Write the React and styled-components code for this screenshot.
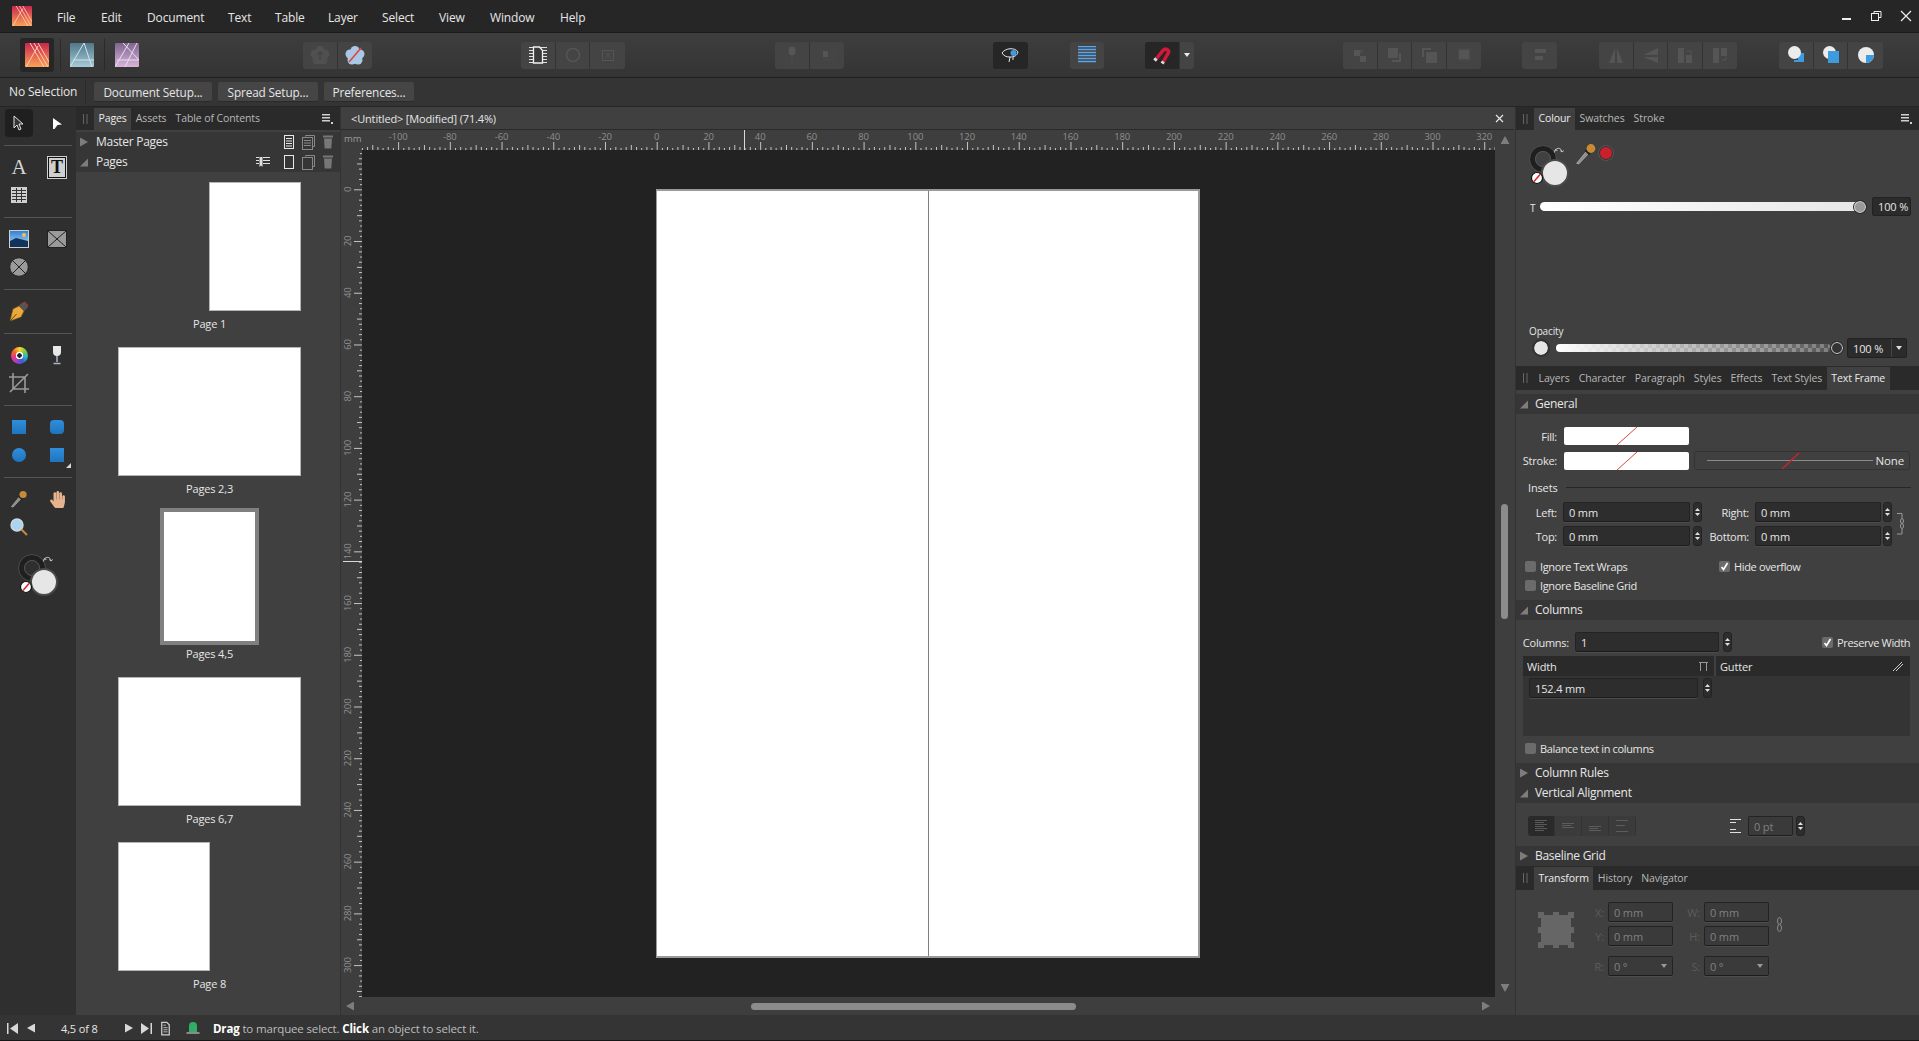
import React from "react";
import styled, { createGlobalStyle } from "styled-components";
import { FaHandPaper } from "react-icons/fa";

const GlobalStyle = createGlobalStyle`
  html, body { margin: 0; padding: 0; background: #262626; overflow: hidden; }
  body { font-family: "Open Sans", "Liberation Sans", sans-serif; font-size: 11.5px; color: #e6e6e6; letter-spacing: -0.15px; }
  * { box-sizing: border-box; }
  svg { display: block; flex: none; }
`;

const Page = styled.div`
  width: 1919px;
  height: 1041px;
  display: flex;
  flex-direction: column;
  overflow: hidden;
`;

/* top bars */
const MenuBar = styled.div`
  height: 33px;
  flex: none;
  display: flex;
  align-items: center;
  background: #262626;
  border-bottom: 1px solid #1b1b1b;
  padding-left: 12px;
`;
const MenuItem = styled.span`
  position: absolute;
  left: ${(p) => p.$x}px;
  top: 10px;
  font-size: 12px;
  line-height: 16px;
`;
const MenuItems = styled.div`
  flex: 1;
  position: relative;
  height: 32px;
  margin-left: -32px;
`;
const WinControls = styled.div`
  display: flex;
  align-items: center;
  gap: 18px;
  padding-right: 7px;
`;
const ToolBar = styled.div`
  height: 45px;
  flex: none;
  display: flex;
  align-items: center;
  padding-left: 20px;
  background: linear-gradient(#3e3e3e, #343434);
  border-bottom: 1px solid #1f1f1f;
`;
const Persona = styled.div`
  width: ${(p) => p.$w}px;
  height: 34px;
  margin-left: ${(p) => p.$ml || 0}px;
  display: flex;
  align-items: center;
  justify-content: center;
  border-radius: 3px;
  background: ${(p) => (p.$on ? "#262626" : "transparent")};
`;
const VSep = styled.div`
  width: 1px;
  height: ${(p) => p.$h || 32}px;
  margin-left: ${(p) => p.$ml}px;
  background: #2a2a2a;
`;
const BtnGroup = styled.div`
  display: flex;
  height: 27px;
  margin-left: ${(p) => p.$ml}px;
  border-radius: 3px;
  overflow: hidden;
`;
const ToolBtn = styled.div`
  width: ${(p) => p.$w || 34.6}px;
  height: 27px;
  display: flex;
  align-items: center;
  justify-content: center;
  background: ${(p) => (p.$dark ? "#262626" : "#444444")};
  border-right: 1px solid #333333;
  &:last-child { border-right: 0; }
`;
const ContextBar = styled.div`
  height: 29px;
  flex: none;
  display: flex;
  align-items: center;
  padding-left: 9px;
  background: #343434;
  border-bottom: 1px solid #252525;
`;
const NoSel = styled.span`
  width: 77px;
  font-size: 12px;
  border-right: 1px solid #2a2a2a;
  line-height: 24px;
`;
const CtxBtn = styled.div`
  width: ${(p) => p.$w}px;
  height: 20px;
  margin-left: ${(p) => p.$ml}px;
  display: flex;
  align-items: center;
  justify-content: center;
  font-size: 11.8px;
  background: #454545;
  border-radius: 2px;
  border-bottom: 1px solid #2a2a2a;
`;

/* main area */
const Main = styled.div`
  height: 908px;
  flex: none;
  display: flex;
`;
const ToolCol = styled.div`
  width: 76px;
  flex: none;
  padding-top: 2px;
  background: #2f2f2f;
`;
const ToolGrid = styled.div`
  display: grid;
  grid-template-columns: 38px 38px;
  grid-auto-rows: 28px;
  justify-items: center;
  align-items: center;
`;
const ToolSep = styled.div`
  height: 1px;
  margin: 7.5px 4px;
  background: #555555;
`;
const ToolCell = styled.div`
  width: 28px;
  height: 28px;
  display: flex;
  align-items: center;
  justify-content: center;
  border-radius: 4px;
  background: ${(p) => (p.$on ? "#1f1f1f" : "transparent")};
  position: relative;
`;
const ArtA = styled.span`
  font-family: "Liberation Serif", serif;
  font-size: 21px;
  color: #d5d5d5;
`;
const ArtT = styled.span`
  width: 18px;
  height: 21px;
  display: flex;
  align-items: center;
  justify-content: center;
  font-family: "Liberation Serif", serif;
  font-weight: 700;
  font-size: 18px;
  color: #111111;
  background: #cfcfcf;
  border: 1px solid #111111;
  outline: 1px solid #cfcfcf;
`;
const Wheel = styled.div`
  width: 17px;
  height: 17px;
  border-radius: 50%;
  background: radial-gradient(circle, #222 0 2px, #fff 2.5px 3.5px, transparent 4px),
    conic-gradient(#f7d733, #7ecb3f, #28b7c9, #3a5bd9, #a63fc9, #e63a7c, #f06a2a, #f7d733);
`;
const ColourFoot = styled.div`
  padding: 11px 0 0 18px;
`;

const PagesPanel = styled.div`
  width: 265px;
  flex: none;
  background: #404040;
  border-right: 1px solid #333333;
`;
const TabStrip = styled.div`
  height: ${(p) => p.$h || 23}px;
  display: flex;
  align-items: flex-end;
  background: #2a2a2a;
  padding-right: 7px;
`;
const Grip = styled.div`
  width: 18px;
  height: 100%;
  display: flex;
  align-items: center;
  justify-content: center;
`;
const Tab = styled.div`
  height: ${(p) => (p.$h ? p.$h - 1 : 22)}px;
  padding: 0 4.5px 2px;
  display: flex;
  align-items: center;
  font-size: 10.5px;
  letter-spacing: -0.1px;
  color: ${(p) => (p.$on ? "#ececec" : "#b8b8b8")};
  background: ${(p) => (p.$on ? "#404040" : "transparent")};
`;
const TabMenu = styled.div`
  margin-left: auto;
  align-self: center;
`;
const GroupHead = styled.div`
  height: 20px;
  display: flex;
  align-items: center;
  padding: 0 6px 2px 0;
  margin-top: ${(p) => p.$top || 0}px;
  background: #363636;
  font-size: 12px;
  letter-spacing: -0.28px;
`;
const Arrow = styled.span`
  width: 8px;
  height: 9px;
  margin: 2px ${(p) => p.$gap || 7}px 0 4px;
  flex: none;
  background: #7d7d7d;
  clip-path: ${(p) =>
    p.$open ? "polygon(100% 10%, 100% 100%, 0 100%)" : "polygon(0 0, 100% 50%, 0 100%)"};
`;
const HeadIcons = styled.div`
  margin-left: auto;
  display: flex;
  align-items: center;
  gap: 7px;
  margin-top: 2px;
`;
const BookmarkBox = styled.div`
  margin-right: 6px;
`;
const ThumbList = styled.div`
  padding: 10px 0 0 42px;
`;
const ThumbSlot = styled.div`
  width: 183px;
  height: 165px;
  display: flex;
  flex-direction: column;
  align-items: center;
`;
const ThumbRow = styled.div`
  width: 183px;
  height: 129px;
  display: flex;
  justify-content: ${(p) => p.$align};
  align-items: center;
`;
const Thumb = styled.div`
  width: ${(p) => p.$w}px;
  height: 129px;
  background: #ffffff;
  border: 1px solid #b5b5b5;
  flex: none;
  ${(p) => p.$sel && "height: 137px; width: 99px; border: 4px solid #808080;"}
`;
const ThumbLabel = styled.div`
  font-size: 11px;
  line-height: 26px;
`;

/* document */
const Doc = styled.div`
  width: 1174px;
  flex: none;
  background: #3e3e3e;
  display: flex;
  flex-direction: column;
`;
const DocTitle = styled.div`
  height: 23px;
  flex: none;
  display: flex;
  align-items: center;
  padding: 0 10px 0 10px;
  margin-right: 1px;
  font-size: 11px;
  background: #404040;
  border-bottom: 1px solid #2a2a2a;
  justify-content: space-between;
`;
const DocBody = styled.div`
  height: 867px;
  display: flex;
  flex: none;
`;
const DocCentre = styled.div`
  width: 1154px;
  flex: none;
`;
const CanvasRow = styled.div`
  height: 847px;
  display: flex;
`;
const Canvas = styled.div`
  width: 1133px;
  height: 847px;
  background: #222222;
  padding: 39px 0 0 294px;
`;
const Spread = styled.div`
  width: 544px;
  height: 769px;
  display: flex;
  background: #ffffff;
  border: 1px solid #9a9a9a;
  border-top-width: 2px;
  border-right-width: 2px;
  border-bottom-width: 2px;
`;
const SpreadLeft = styled.div`
  width: 272px;
  border-right: 1px solid #808080;
`;
const VScroll = styled.div`
  width: 20px;
  display: flex;
  flex-direction: column;
  align-items: center;
  padding: 6px 0 5px;
`;
const VThumb = styled.div`
  width: 7px;
  height: 115px;
  margin-top: 360px;
  margin-bottom: auto;
  margin-right: 2px;
  border-radius: 4px;
  background: #8c8c8c;
`;
const HScroll = styled.div`
  height: 18px;
  flex: none;
  display: flex;
  align-items: center;
  padding-left: 5px;
  padding-right: 25px;
`;
const HThumb = styled.div`
  width: 325px;
  height: 7px;
  margin-left: 397px;
  margin-right: auto;
  border-radius: 4px;
  background: #8c8c8c;
`;
const Tri = styled.span`
  display: block;
  flex: none;
  width: ${(p) => (p.$dir === "l" || p.$dir === "r" ? 8 : 9)}px;
  height: ${(p) => (p.$dir === "l" || p.$dir === "r" ? 9 : 8)}px;
  background: ${(p) => p.$c || "#7d7d7d"};
  clip-path: ${(p) =>
    ({
      u: "polygon(50% 0, 100% 100%, 0 100%)",
      d: "polygon(0 0, 100% 0, 50% 100%)",
      l: "polygon(0 50%, 100% 0, 100% 100%)",
      r: "polygon(0 0, 100% 50%, 0 100%)",
    })[p.$dir]};
`;

/* right panel */
const RightPanel = styled.div`
  width: 404px;
  flex: none;
  display: flex;
  flex-direction: column;
  background: #404040;
  border-left: 1px solid #333333;
`;
const ColourBody = styled.div`
  height: 236px;
  flex: none;
  display: flex;
  flex-direction: column;
  padding: 13px 8px 8px 13px;
`;
const ColourTop = styled.div`
  display: flex;
  align-items: flex-start;
`;
const DropperBox = styled.div`
  margin-left: 4px;
`;
const ChosenDot = styled.div`
  width: 14px;
  height: 14px;
  margin: 3px 0 0 2px;
  border-radius: 50%;
  background: #c8202c;
  border: 1px solid #303030;
  outline: 1px solid #555;
`;
const SliderRow = styled.div`
  height: 19px;
  margin-top: 10px;
  display: flex;
  align-items: center;
`;
const TMark = styled.span`
  width: 10px;
  font-size: 10px;
  margin-top: 3px;
  margin-left: 1px;
  color: #e8e8e8;
`;
const TintTrack = styled.div`
  position: relative;
  width: 322px;
  height: 9px;
  border-radius: 5px;
  background: linear-gradient(90deg, #ffffff, #e6e6e6);
`;
const Knob = styled.span`
  position: absolute;
  right: ${(p) => p.$r}px;
  top: 50%;
  width: 12px;
  height: 12px;
  margin-top: -6px;
  border-radius: 50%;
  background: ${(p) => p.$bg};
  border: 1.5px solid #d8d8d8;
  outline: 1px solid #2b2b2b;
`;
const ValueBox = styled.div`
  width: ${(p) => p.$w}px;
  height: ${(p) => p.$h || 19}px;
  margin-left: ${(p) => p.$ml}px;
  display: flex;
  align-items: center;
  background: #2b2b2b;
  border: 1px solid #222222;
  border-radius: 2px;
  padding-left: 5px;
  font-size: 11px;
`;
const BoxDrop = styled.span`
  margin-left: auto;
  width: 15px;
  height: 100%;
  display: flex;
  align-items: center;
  justify-content: center;
  border-left: 1px solid #444444;
`;
const OpacityLabel = styled.div`
  margin-top: auto;
  font-size: 10px;
  line-height: 11px;
`;
const OpacityRow = styled.div`
  height: 20px;
  margin-top: 1px;
  display: flex;
  align-items: center;
`;
const OpacitySwatch = styled.span`
  width: 14px;
  height: 14px;
  margin-left: 5px;
  border-radius: 50%;
  background: #e6e6e6;
  outline: 2px solid #333333;
`;
const OpacityTrack = styled.div`
  position: relative;
  width: 275px;
  height: 8px;
  margin-left: 8px;
  border-radius: 4px;
  background: linear-gradient(90deg, #ffffff, rgba(255, 255, 255, 0)),
    repeating-conic-gradient(#555555 0 25%, #7e7e7e 0 50%) 0 0 / 8px 8px;
`;
const Form = styled.div`
  height: ${(p) => p.$h}px;
  flex: none;
  padding-top: ${(p) => p.$pt || 0}px;
`;
const Row = styled.div`
  display: flex;
  align-items: center;
  height: ${(p) => p.$h || 20}px;
  margin-top: ${(p) => p.$top || 0}px;
  margin-left: ${(p) => p.$ml || 0}px;
`;
const Lbl = styled.span`
  width: ${(p) => p.$w}px;
  flex: none;
  text-align: right;
  margin-right: ${(p) => p.$mr ?? 6}px;
  font-size: 11px;
  letter-spacing: -0.25px;
  color: #e6e6e6;
`;
const FillSwatch = styled.div`
  width: 125px;
  height: 18px;
  display: flex;
  align-items: center;
  justify-content: center;
  background: #ffffff;
  border-radius: 2px;
`;
const LineBox = styled.div`
  width: 216px;
  height: 19px;
  margin-left: 5px;
  display: flex;
  align-items: center;
  padding: 0 5px 0 12px;
  border: 1px solid #333333;
  border-radius: 3px;
  font-size: 11.5px;
  justify-content: space-between;
`;
const InsetTitle = styled.div`
  height: 18px;
  margin: 8px 8px 6px 12px;
  display: flex;
  align-items: center;
  gap: 8px;
  font-size: 11px;
  &::after { content: ""; flex: 1; height: 1px; background: #262626; }
`;
const InsetWrap = styled.div`
  display: flex;
  align-items: center;
`;
const LinkBracket = styled.div`
  margin-left: 5px;
`;
const Field = styled.div`
  width: ${(p) => p.$w}px;
  height: 20px;
  margin-left: ${(p) => p.$ml || 0}px;
  display: flex;
  align-items: center;
  padding-left: 5px;
  padding-right: 5px;
  font-size: 11px;
  color: ${(p) => (p.$dim ? "#808080" : "#e6e6e6")};
  background: ${(p) => (p.$dim ? "#3a3a3a" : "#2d2d2d")};
  border: 1px solid #232323;
  border-bottom-color: #1c1c1c;
  border-radius: 2px;
  box-shadow: 0 1px 0 #4d4d4d;
  justify-content: space-between;
`;
const Spin = styled.div`
  width: 9px;
  height: 20px;
  margin-left: ${(p) => p.$ml ?? 3}px;
  flex: none;
  display: flex;
  flex-direction: column;
  align-items: center;
  justify-content: center;
  gap: 2px;
  background: #2d2d2d;
  border-radius: 3px;
  border: 1px solid #232323;
`;
const SpinTri = styled.span`
  width: 5px;
  height: 3px;
  background: #e0e0e0;
  clip-path: ${(p) => (p.$up ? "polygon(50% 0, 100% 100%, 0 100%)" : "polygon(0 0, 100% 0, 50% 100%)")};
`;
const Check = styled.span`
  width: 11px;
  height: 11px;
  flex: none;
  display: flex;
  align-items: center;
  justify-content: center;
  background: #6b6b6b;
  border-radius: 2px;
  margin-right: 4px;
`;
const CheckItem = styled.div`
  display: flex;
  align-items: center;
  height: 16px;
  font-size: 11px;
  letter-spacing: -0.35px;
  width: ${(p) => p.$w || "auto"};
  margin-left: ${(p) => p.$ml || 0}px;
`;
const ColTable = styled.div`
  width: 387px;
  margin: 4px 0 0 7px;
`;
const ColHead = styled.div`
  display: flex;
  gap: 2px;
`;
const ColCell = styled.div`
  width: ${(p) => p.$w}px;
  height: 20px;
  display: flex;
  align-items: center;
  justify-content: space-between;
  padding: 0 6px 0 4px;
  font-size: 11px;
  background: #2a2a2a;
`;
const ColBody = styled.div`
  height: 60px;
  padding: 2px 0 0 6px;
  display: flex;
  align-items: flex-start;
  background: #343434;
`;
const AlignGroup = styled.div`
  display: flex;
  margin-left: 12px;
  border-radius: 3px;
  overflow: hidden;
`;
const AlignBtn = styled.div`
  width: 27px;
  height: 20px;
  display: flex;
  align-items: center;
  justify-content: center;
  background: ${(p) => (p.$on ? "#2a2a2a" : "#3b3b3b")};
  border-right: 1px solid #333333;
`;
const BaselineIcon = styled.div`
  margin-left: 94px;
`;
const TransformBody = styled.div`
  flex: 1;
  display: flex;
  padding: 12px 0 0 22px;
`;
const TransformGrid = styled.div`
  display: grid;
  grid-template-columns: 34px 65px 31px 65px;
  grid-template-rows: 20px 20px 20px;
  row-gap: 4px;
  align-items: center;
  & > :nth-child(n + 9) { margin-top: 12px; }
`;
const TfLbl = styled.span`
  font-size: 11px;
  text-align: right;
  padding-right: 4px;
  color: #5c5c5c;
`;
const AnchorBox = styled.div`
  width: 36px;
  margin-top: 10px;
`;
const ChainBox = styled.div`
  margin: 15px 0 0 8px;
`;

/* status bar */
const StatusBar = styled.div`
  height: 26px;
  flex: none;
  display: flex;
  align-items: center;
  padding: 1px 0 0 7px;
  background: #343434;
  border-bottom: 1px solid #161616;
  font-size: 11.5px;
`;
const PageCount = styled.span`
  width: 64px;
  margin-left: 26px;
  font-size: 11px;
`;
const Hint = styled.span`
  margin-left: 13px;
  color: #bdbdbd;
  b { color: #ffffff; font-weight: 700; }
`;
const StatusIcon = styled.span`
  margin-left: ${(p) => p.$ml || 0}px;
  display: flex;
`;

/* drawings */
const Logo = ({ size = 24, from, to, line, children }) => {
  const id = `lg${from.slice(1)}${size}`;
  return (
    <svg width={size} height={size} viewBox="0 0 24 24">
      <defs>
        <linearGradient id={id} x1="0" y1="0" x2="0" y2="1">
          <stop offset="0" stopColor={from} />
          <stop offset="1" stopColor={to} />
        </linearGradient>
      </defs>
      <rect width="24" height="24" rx="1" fill={`url(#${id})`} />
      <g stroke={line} fill="none" strokeWidth="1">{children}</g>
    </svg>
  );
};
const PubLogo = ({ size }) => (
  <Logo size={size} from="#c8264f" to="#fba255" line="#ffd0b0">
    <path d="M9 0l14 24M13 0l11 19M5 0l14 24M1 24 13 3" />
  </Logo>
);
const DesLogo = () => (
  <Logo from="#50778a" to="#a6cbd6" line="#cfe4ea">
    <path d="M0 24 14 0M14 0l8 24M3 17h21" />
  </Logo>
);
const PhoLogo = () => (
  <Logo from="#7d648f" to="#d8b6da" line="#eedcf0">
    <path d="M0 24 14 0M8 0l16 17M2 17h22M22 0 10 24" />
  </Logo>
);
const Flower = ({ c, children }) => (
  <svg width="20" height="20" viewBox="0 0 20 20">
    <g fill={c}>
      <circle cx="10" cy="5.500" r="4.500" />
      <circle cx="15" cy="9" r="4.500" />
      <circle cx="13" cy="15" r="4.500" />
      <circle cx="7" cy="15" r="4.500" />
      <circle cx="5" cy="9" r="4.500" />
      <circle cx="10" cy="10" r="5" />
    </g>
    {children}
  </svg>
);
const Dim = ({ w = 20, h = 20, children }) => (
  <svg width={w} height={h} viewBox={`0 0 ${w} ${h}`} fill="#555555">{children}</svg>
);
const Bool = ({ children }) => (
  <svg width="20" height="20" viewBox="0 0 20 20">{children}</svg>
);
const FlowDoc = () => (
  <svg width="18" height="18" viewBox="0 0 18 18">
    <path d="M0 1.500h18M0 4.500h18M0 7.500h18M0 10.500h18M0 13.500h18M0 16.500h18" stroke="#e0e0e0" />
    <path d="M4.500 1h6l3 3.500V17h-9z" fill="#3a3a3a" stroke="#f0f0f0" strokeWidth="1.300" />
  </svg>
);
const DocLines = ({ s = 18, c = "#e6e6e6" }) => (
  <svg width={s} height={s} viewBox="0 0 18 18" fill="none" stroke={c}>
    <path d="M4.500 1.500h6l3 3v12h-9z" strokeWidth="1.500" />
    <path d="M6.500 5h3M6.500 8h5M6.500 10.500h5M6.500 13h5" />
  </svg>
);
const Trash = () => (
  <svg width="12" height="14" viewBox="0 0 12 14" fill="#777777">
    <rect x="1" y="0.500" width="10" height="2" />
    <path d="M2 3.500h8l-.7 10H2.700z" />
  </svg>
);
const SmallDoc = ({ lines, c = "#e6e6e6" }) => (
  <svg width="12" height="14" viewBox="0 0 12 14" fill="none" stroke={c}>
    <rect x="1.500" y="0.500" width="9" height="13" strokeWidth="1" />
    {lines && <path d="M3 3.500h6M3 6h6M3 8.500h6M3 11h6" strokeWidth="1.200" />}
  </svg>
);
const DoubleDoc = ({ lines }) => (
  <svg width="13" height="15" viewBox="0 0 13 15" fill="none" stroke="#888888">
    <path d="M3.500 1.500V.5h9v11h-2" />
    <rect x="0.500" y="2.500" width="10" height="12" />
    {lines && <path d="M2 5.500h7M2 8h7M2 10.500h7" />}
  </svg>
);
const MenuIcon = () => (
  <svg width="11" height="10" viewBox="0 0 11 10" fill="#d0d0d0">
    <path d="M0 0h8v1.500H0zM0 3h8v1.500H0zM0 6h8v1.500H0zM9 8h2v2H9z" />
  </svg>
);
const GripIcon = () => (
  <svg width="5" height="10" viewBox="0 0 5 10" stroke="#666666">
    <path d="M.5 0v10M4 0v10" />
  </svg>
);
const ColourWidget = () => (
  <svg width="42" height="44" viewBox="0 0 42 44">
    <circle cx="14" cy="16" r="10.500" fill="none" stroke="#1f1f1f" strokeWidth="5" />
    <circle cx="14" cy="16" r="13.500" fill="none" stroke="#4a4a4a" strokeWidth="1" />
    <circle cx="14" cy="16" r="7.500" fill="none" stroke="#555555" strokeWidth="1" />
    <circle cx="26" cy="30" r="13" fill="#e6e6e6" stroke="#4a4a4a" strokeWidth="2" />
    <circle cx="8" cy="35" r="5.500" fill="#ffffff" stroke="#111111" strokeWidth="1.200" />
    <path d="M5 38.500 11 31.500" stroke="#e0202c" strokeWidth="1.500" />
    <path d="M26 7c3-2.500 6-2.500 7 2M26 7l-.5 2.500M26 7l2.500.3M33 9l-1.800-1.500M33 9l1.800-1.500" fill="none" stroke="#c8c8c8" />
  </svg>
);
const Dropper = ({ s = 20 }) => (
  <svg width={s} height={s} viewBox="0 0 20 20">
    <path d="M1.500 18.500 10 8l2 2-8.500 9z" fill="#8e8e8e" stroke="#d0d0d0" strokeWidth=".5" />
    <path d="M9.500 6.500l4 4" stroke="#222" strokeWidth="2" />
    <circle cx="14.500" cy="5" r="4" fill="#c98a35" />
  </svg>
);
const Pen = () => (
  <svg width="22" height="22" viewBox="0 0 22 22">
    <path d="M2 21 5 9l6-3 5 5-3 6z" fill="#e9a93b" stroke="#8a5a1a" strokeWidth=".6" />
    <path d="M2 21 8.500 14" stroke="#5a3a10" strokeWidth=".9" />
    <path d="M11 5.500 15 2l5 5-3.500 4z" fill="#555555" />
    <path d="M16 2l4 4" stroke="#b33" strokeWidth="1.500" />
  </svg>
);
const PictureIcon = () => (
  <svg width="20" height="18" viewBox="0 0 20 18">
    <defs>
      <linearGradient id="sky" x1="0" y1="0" x2="0" y2="1">
        <stop offset="0" stopColor="#2f7fd4" />
        <stop offset="1" stopColor="#bfe0f7" />
      </linearGradient>
    </defs>
    <rect x="0.500" y="0.500" width="19" height="17" fill="url(#sky)" stroke="#cfcfcf" />
    <circle cx="15" cy="5" r="2" fill="#f4c542" />
    <path d="M1 11 7 8l12 3v6H1z" fill="#12335c" />
  </svg>
);
const XFrame = () => (
  <svg width="20" height="18" viewBox="0 0 20 18">
    <rect x="0.500" y="0.500" width="19" height="17" fill="#9a9a9a" stroke="#222" />
    <path d="M1 1l18 16M19 1 1 17" stroke="#222" />
  </svg>
);
const XCircle = () => (
  <svg width="20" height="20" viewBox="0 0 20 20">
    <circle cx="10" cy="10" r="9.300" fill="#9a9a9a" stroke="#222" />
    <path d="M3.500 3.500l13 13M16.500 3.500l-13 13" stroke="#222" />
  </svg>
);
const TableIcon = () => (
  <svg width="16" height="16" viewBox="0 0 16 16">
    <rect x="0.500" y="0.500" width="15" height="15" fill="#cfcfcf" stroke="#cfcfcf" />
    <path d="M5.500 1v14M10.500 1v14M1 3.500h14M1 6.500h14M1 9.500h14M1 12.500h14" stroke="#333" />
  </svg>
);
const Crop = () => (
  <svg width="20" height="20" viewBox="0 0 20 20" fill="none" stroke="#9a9a9a" strokeWidth="1.600">
    <path d="M4 0v16h16M0 4h16v16M1 19 19 1" />
  </svg>
);
const Glass = () => (
  <svg width="12" height="20" viewBox="0 0 12 20">
    <path d="M2 1h8v6a4 4 0 0 1-8 0z" fill="#e8e8e8" />
    <path d="M6 11v6M2.500 18.500h7" stroke="#aab4c8" strokeWidth="1.500" />
  </svg>
);
const ShapeBlue = styled.div`
  width: 14px;
  height: 14px;
  background: linear-gradient(#2f8edb, #1f74bd);
  border-radius: ${(p) => p.$r || 0}px;
`;
const Corner = styled.span`
  position: absolute;
  right: 0;
  bottom: 1px;
  width: 5px;
  height: 5px;
  background: #d8d8d8;
  clip-path: polygon(100% 0, 100% 100%, 0 100%);
`;
const Magnifier = () => (
  <svg width="18" height="18" viewBox="0 0 18 18">
    <circle cx="7" cy="7" r="6" fill="#a9d4f2" stroke="#d8d8d8" strokeWidth="1.400" />
    <path d="M11.500 11.500 17 17" stroke="#c98a35" strokeWidth="2" />
  </svg>
);
const MoveCursor = () => (
  <svg width="12" height="16" viewBox="0 0 12 16">
    <path d="M1 1v12l3-3 2 5 2-1-2-5h4z" fill="#333" stroke="#e0e0e0" />
  </svg>
);
const NodeCursor = () => (
  <svg width="9" height="11" viewBox="0 0 9 11">
    <path d="M0 0 9 6.500 4.500 7 1.500 11 0 11z" fill="#ffffff" />
  </svg>
);
const Slash = ({ w = 20, h = 18, c = "#d84a3c" }) => (
  <svg width={w} height={h} viewBox={`0 0 ${w} ${h}`}>
    <path d={`M0 ${h}L${w} 0`} stroke={c} strokeWidth="1" />
  </svg>
);
const Chain = ({ h = 15, c = "#8a8a8a" }) => (
  <svg width="5" height={h} viewBox="0 0 5 15" fill="none" stroke={c}>
    <ellipse cx="2.500" cy="4" rx="2" ry="3.500" />
    <ellipse cx="2.500" cy="11" rx="2" ry="3.500" />
  </svg>
);
const AlignLines = ({ y, c = "#5c5c5c" }) => (
  <svg width="14" height="14" viewBox="0 0 14 14" stroke={c}>
    {y.map((v, i) => <path key={i} d={`M1 ${v + 0.5}h${i % 2 ? 9 : 12}`} />)}
  </svg>
);

const RULER_SCALE = 2.586;
const HRuler = () => {
  const ticks = [];
  const labels = [];
  for (let u = -114; u <= 324; u += 2) {
    const x = 315.7 + u * RULER_SCALE;
    const h = u % 20 === 0 ? 8 : u % 10 === 0 ? 5 : u % 4 === 0 ? 3 : 2;
    ticks.push(<rect key={u} x={x} y={20 - h} width="1" height={h} fill="#c4c4c4" />);
    if (u % 20 === 0) {
      labels.push(
        <text key={u} x={x} y="10" textAnchor="middle" fontSize="9.500" fill="#8e8e8e">{u}</text>
      );
    }
  }
  return (
    <svg width="1154" height="20" viewBox="0 0 1154 20">
      <text x="3" y="12" fontSize="9.500" fill="#9a9a9a">mm</text>
      {labels}
      {ticks}
      <rect x="403" y="0" width="1" height="20" fill="#d8d8d8" />
    </svg>
  );
};
const VRuler = () => {
  const ticks = [];
  const labels = [];
  for (let u = -14; u <= 312; u += 2) {
    const y = 39.3 + u * RULER_SCALE;
    const w = u % 20 === 0 ? 8 : u % 10 === 0 ? 5 : u % 4 === 0 ? 3 : 2;
    ticks.push(<rect key={u} x={21 - w} y={y} width={w} height="1" fill="#c4c4c4" />);
    if (u % 20 === 0) {
      labels.push(
        <text key={u} transform={`translate(10 ${y}) rotate(-90)`} textAnchor="middle" fontSize="9.500" fill="#8e8e8e">{u}</text>
      );
    }
  }
  return (
    <svg width="21" height="847" viewBox="0 0 21 847">
      {labels}
      {ticks}
      <rect x="2" y="411" width="19" height="1" fill="#d8d8d8" />
    </svg>
  );
};

const MENU = [["File", 57], ["Edit", 101], ["Document", 147], ["Text", 228], ["Table", 275], ["Layer", 328], ["Select", 382], ["View", 439], ["Window", 490], ["Help", 560]];

const Spinner = ({ ml }) => (
  <Spin $ml={ml}><SpinTri $up /><SpinTri /></Spin>
);

const Tick = () => (
  <svg width="9" height="9" viewBox="0 0 9 9"><path d="M1.500 5 3.500 7.500 7.500 1" stroke="#fff" strokeWidth="1.700" fill="none" /></svg>
);

const Tabs = ({ items, active, h, menu }) => (
  <TabStrip $h={h}>
    <Grip><GripIcon /></Grip>
    {items.map((t) => <Tab key={t} $on={t === active} $h={h}>{t}</Tab>)}
    {menu && <TabMenu><MenuIcon /></TabMenu>}
  </TabStrip>
);

const App = () => (
  <Page>
    <GlobalStyle />
    <MenuBar>
      <PubLogo size={20} />
      <MenuItems>
        {MENU.map(([t, x]) => <MenuItem key={t} $x={x}>{t}</MenuItem>)}
      </MenuItems>
      <WinControls>
        <svg width="11" height="12" viewBox="0 0 11 12"><rect y="8" width="9" height="2" fill="#eee" /></svg>
        <svg width="11" height="12" viewBox="0 0 11 12" fill="none" stroke="#eee"><rect x="0.500" y="3.500" width="7" height="7" /><path d="M3 3V1.500h7v6H8" /></svg>
        <svg width="12" height="12" viewBox="0 0 12 12" stroke="#eee" strokeWidth="1.200"><path d="M1 1l10 10M11 1 1 11" /></svg>
      </WinControls>
    </MenuBar>

    <ToolBar>
      <Persona $w={34} $on><PubLogo /></Persona>
      <VSep $ml={6} />
      <Persona $w={24} $ml={9}><DesLogo /></Persona>
      <VSep $ml={10} />
      <Persona $w={24} $ml={10}><PhoLogo /></Persona>
      <BtnGroup $ml={164}>
        <ToolBtn><Flower c="#505050"><path d="M10 15V7M7.500 9.500 10 7l2.500 2.500" stroke="#3c3c3c" fill="none" /></Flower></ToolBtn>
        <ToolBtn><Flower c="#a8c8e6"><path d="M4 17 16 3" stroke="#e0453a" strokeWidth="1.600" /></Flower></ToolBtn>
      </BtnGroup>
      <BtnGroup $ml={149}>
        <ToolBtn><FlowDoc /></ToolBtn>
        <ToolBtn><Dim><circle cx="10" cy="10" r="6.500" fill="none" stroke="#555" strokeWidth="1.500" /></Dim></ToolBtn>
        <ToolBtn><Dim><rect x="4.500" y="5.500" width="11" height="10" fill="none" stroke="#555" /><path d="M7.500 8l5 5M12.500 8l-5 5" stroke="#555" /></Dim></ToolBtn>
      </BtnGroup>
      <BtnGroup $ml={150}>
        <ToolBtn><Dim><ellipse cx="10" cy="6" rx="3.500" ry="4.500" /><path d="M9.700 10h.6v10h-.6z" /></Dim></ToolBtn>
        <ToolBtn><Dim><rect x="6" y="6" width="5" height="6" /><path d="M13 5h6M13 8h6M13 11h6M6 15h13" stroke="#484848" /></Dim></ToolBtn>
      </BtnGroup>
      <BtnGroup $ml={149}>
        <ToolBtn $dark>
          <svg width="20" height="18" viewBox="0 0 20 18" fill="none">
            <path d="M2 7c3-5 13-6 16-1-1 4-4 5-8 5S4 10 2 7z" stroke="#e6e6e6" />
            <path d="M10 11l-1 5M13 11v3" stroke="#e6e6e6" />
            <circle cx="13.500" cy="7" r="3" fill="#3d9be0" />
          </svg>
        </ToolBtn>
      </BtnGroup>
      <BtnGroup $ml={42}>
        <ToolBtn>
          <svg width="18" height="18" viewBox="0 0 18 18" stroke="#58a6f0"><path d="M0 .5h18M0 3.500h18M0 6.500h18M0 9.500h18M0 12.500h18M0 15.500h18" strokeWidth="1.400" /></svg>
        </ToolBtn>
      </BtnGroup>
      <BtnGroup $ml={41}>
        <ToolBtn $dark>
          <svg width="20" height="20" viewBox="0 0 20 20" fill="none">
            <path d="M4.500 13.500 11 5.500c3-3 7 0 5 3L11.500 16.500" stroke="#d4183a" strokeWidth="3.500" />
            <path d="M4.500 13.500l-2 2M11.500 16.500l-1.500 2" stroke="#dcdcdc" strokeWidth="3.500" />
          </svg>
        </ToolBtn>
        <ToolBtn $w={14}><svg width="6" height="4" viewBox="0 0 6 4"><path d="M0 0h6L3 4z" fill="#eee" /></svg></ToolBtn>
      </BtnGroup>
      <BtnGroup $ml={149}>
        <ToolBtn><Dim><rect x="4" y="5" width="6" height="6" /><rect x="10" y="11" width="6" height="6" /><rect x="10" y="5" width="3" height="3" fill="#4c4c4c" /></Dim></ToolBtn>
        <ToolBtn><Dim><rect x="4" y="3" width="10" height="10" /><path d="M15 8h2v9H8v-2h7z" /></Dim></ToolBtn>
        <ToolBtn><Dim><path d="M3 3h9v2H5v7H3z" /><rect x="7" y="7" width="11" height="11" /></Dim></ToolBtn>
        <ToolBtn><Dim><path d="M5 4h11v11H5z" fill="none" stroke="#4c4c4c" /><rect x="5" y="5" width="10" height="9" /></Dim></ToolBtn>
      </BtnGroup>
      <BtnGroup $ml={41}>
        <ToolBtn><Dim><rect x="5" y="4" width="11" height="4" /><rect x="5" y="11" width="8" height="4" /></Dim></ToolBtn>
      </BtnGroup>
      <BtnGroup $ml={42}>
        <ToolBtn><Dim><path d="M9 3v15H3zM11 3l6 15h-6z" /></Dim></ToolBtn>
        <ToolBtn><Dim><path d="M18 3v7H3zM18 12v6L3 12z" /></Dim></ToolBtn>
        <ToolBtn><Dim><rect x="3" y="3" width="6" height="15" /><rect x="11" y="10" width="6" height="8" /><path d="M12 6h4v3" fill="none" stroke="#555" /></Dim></ToolBtn>
        <ToolBtn><Dim><rect x="3" y="3" width="6" height="15" /><rect x="11" y="3" width="6" height="8" /><path d="M12 15h4v-3" fill="none" stroke="#555" /></Dim></ToolBtn>
      </BtnGroup>
      <BtnGroup $ml={42}>
        <ToolBtn>
          <Bool><path d="M12 8h6v9H8v-2h4z" fill="#3d9be0" /><circle cx="8.500" cy="7.500" r="6.500" fill="#ececec" /></Bool>
        </ToolBtn>
        <ToolBtn>
          <Bool><circle cx="8.500" cy="7.500" r="6.500" fill="#ececec" /><rect x="7" y="6" width="11" height="12" fill="#3d9be0" /></Bool>
        </ToolBtn>
        <ToolBtn>
          <Bool><circle cx="10" cy="10" r="8" fill="#ececec" /><path d="M10 10h8a8 8 0 0 1-8 8z" fill="#3d9be0" /></Bool>
        </ToolBtn>
      </BtnGroup>
    </ToolBar>

    <ContextBar>
      <NoSel>No Selection</NoSel>
      <CtxBtn $w={118} $ml={8}>Document Setup...</CtxBtn>
      <CtxBtn $w={100} $ml={6}>Spread Setup...</CtxBtn>
      <CtxBtn $w={90} $ml={6}>Preferences...</CtxBtn>
    </ContextBar>

    <Main>
      <ToolCol>
        <ToolGrid>
          <ToolCell $on><MoveCursor /></ToolCell>
          <ToolCell><NodeCursor /></ToolCell>
        </ToolGrid>
        <ToolSep />
        <ToolGrid>
          <ToolCell><ArtA>A</ArtA></ToolCell>
          <ToolCell><ArtT>T</ArtT></ToolCell>
          <ToolCell><TableIcon /></ToolCell>
        </ToolGrid>
        <ToolSep />
        <ToolGrid>
          <ToolCell><PictureIcon /></ToolCell>
          <ToolCell><XFrame /></ToolCell>
          <ToolCell><XCircle /></ToolCell>
        </ToolGrid>
        <ToolSep />
        <ToolGrid>
          <ToolCell><Pen /></ToolCell>
        </ToolGrid>
        <ToolSep />
        <ToolGrid>
          <ToolCell><Wheel /></ToolCell>
          <ToolCell><Glass /></ToolCell>
          <ToolCell><Crop /></ToolCell>
        </ToolGrid>
        <ToolSep />
        <ToolGrid>
          <ToolCell><ShapeBlue /></ToolCell>
          <ToolCell><ShapeBlue $r={4} /></ToolCell>
          <ToolCell><ShapeBlue $r={7} /></ToolCell>
          <ToolCell><ShapeBlue /><Corner /></ToolCell>
        </ToolGrid>
        <ToolSep />
        <ToolGrid>
          <ToolCell><Dropper s={18} /></ToolCell>
          <ToolCell><FaHandPaper size={17} color="#e8b48f" /></ToolCell>
          <ToolCell><Magnifier /></ToolCell>
        </ToolGrid>
        <ColourFoot><ColourWidget /></ColourFoot>
      </ToolCol>

      <PagesPanel>
        <Tabs items={["Pages", "Assets", "Table of Contents"]} active="Pages" menu />
        <GroupHead $top={2}>
          <Arrow $gap={8} />Master Pages
          <HeadIcons>
            <SmallDoc lines />
            <DoubleDoc lines />
            <Trash />
          </HeadIcons>
        </GroupHead>
        <GroupHead>
          <Arrow $open $gap={8} />Pages
          <HeadIcons>
            <BookmarkBox>
              <svg width="14" height="11" viewBox="0 0 14 11" stroke="#e0e0e0" fill="none">
                <path d="M7 .5h7M7 3.500h7M7 6.500h7M0 .5h3M0 3.500h3M0 6.500h3" />
                <path d="M3.500 0h3v10L5 8.500 3.500 10z" fill="#e0e0e0" stroke="none" />
              </svg>
            </BookmarkBox>
            <SmallDoc />
            <DoubleDoc />
            <Trash />
          </HeadIcons>
        </GroupHead>
        <ThumbList>
          <ThumbSlot>
            <ThumbRow $align="flex-end"><Thumb $w={92} /></ThumbRow>
            <ThumbLabel>Page 1</ThumbLabel>
          </ThumbSlot>
          <ThumbSlot>
            <ThumbRow $align="center"><Thumb $w={183} /></ThumbRow>
            <ThumbLabel>Pages 2,3</ThumbLabel>
          </ThumbSlot>
          <ThumbSlot>
            <ThumbRow $align="center"><Thumb $sel /></ThumbRow>
            <ThumbLabel>Pages 4,5</ThumbLabel>
          </ThumbSlot>
          <ThumbSlot>
            <ThumbRow $align="center"><Thumb $w={183} /></ThumbRow>
            <ThumbLabel>Pages 6,7</ThumbLabel>
          </ThumbSlot>
          <ThumbSlot>
            <ThumbRow $align="flex-start"><Thumb $w={92} /></ThumbRow>
            <ThumbLabel>Page 8</ThumbLabel>
          </ThumbSlot>
        </ThumbList>
      </PagesPanel>

      <Doc>
        <DocTitle>
          <span>&lt;Untitled&gt; [Modified] (71.4%)</span>
          <svg width="9" height="9" viewBox="0 0 9 9" stroke="#e6e6e6" strokeWidth="1.200"><path d="M1 1l7 7M8 1 1 8" /></svg>
        </DocTitle>
        <DocBody>
          <DocCentre>
            <HRuler />
            <CanvasRow>
              <VRuler />
              <Canvas>
                <Spread><SpreadLeft /></Spread>
              </Canvas>
            </CanvasRow>
          </DocCentre>
          <VScroll>
            <Tri $dir="u" />
            <VThumb />
            <Tri $dir="d" />
          </VScroll>
        </DocBody>
        <HScroll>
          <Tri $dir="l" />
          <HThumb />
          <Tri $dir="r" />
        </HScroll>
      </Doc>

      <RightPanel>
        <Tabs items={["Colour", "Swatches", "Stroke"]} active="Colour" menu />
        <ColourBody>
          <ColourTop>
            <ColourWidget />
            <DropperBox><Dropper s={22} /></DropperBox>
            <ChosenDot />
          </ColourTop>
          <SliderRow>
            <TMark>T</TMark>
            <TintTrack><Knob $r={-4} $bg="#9a9a9a" /></TintTrack>
            <ValueBox $w={39} $ml={10}>100 %</ValueBox>
          </SliderRow>
          <OpacityLabel>Opacity</OpacityLabel>
          <OpacityRow>
            <OpacitySwatch />
            <OpacityTrack><Knob $r={-12} $bg="#333" /></OpacityTrack>
            <ValueBox $w={60} $h={20} $ml={16}>
              100 %
              <BoxDrop><svg width="6" height="4" viewBox="0 0 6 4"><path d="M0 0h6L3 4z" fill="#ddd" /></svg></BoxDrop>
            </ValueBox>
          </OpacityRow>
        </ColourBody>

        <Tabs items={["Layers", "Character", "Paragraph", "Styles", "Effects", "Text Styles", "Text Frame"]} active="Text Frame" h={24} />
        <GroupHead $top={4}><Arrow $open />General</GroupHead>
        <Form $h={186} $pt={13}>
          <Row $h={18}>
            <Lbl $w={41} $mr={7}>Fill:</Lbl>
            <FillSwatch><Slash /></FillSwatch>
          </Row>
          <Row $h={19} $top={6}>
            <Lbl $w={41} $mr={7}>Stroke:</Lbl>
            <FillSwatch><Slash /></FillSwatch>
            <LineBox>
              <svg width="166" height="17" viewBox="0 0 166 17">
                <path d="M0 8.500h166" stroke="#8a8a8a" />
                <path d="M75 17 92 1" stroke="#d8202c" strokeWidth="1.200" />
              </svg>
              None
            </LineBox>
          </Row>
          <InsetTitle>Insets</InsetTitle>
          <InsetWrap>
            <div>
              <Row>
                <Lbl $w={41}>Left:</Lbl>
                <Field $w={127}>0 mm</Field>
                <Spinner />
                <Lbl $w={47}>Right:</Lbl>
                <Field $w={126}>0 mm</Field>
                <Spinner ml={2} />
              </Row>
              <Row $top={4}>
                <Lbl $w={41}>Top:</Lbl>
                <Field $w={127}>0 mm</Field>
                <Spinner />
                <Lbl $w={47}>Bottom:</Lbl>
                <Field $w={126}>0 mm</Field>
                <Spinner ml={2} />
              </Row>
            </div>
            <LinkBracket>
              <svg width="7" height="22" viewBox="0 0 7 22" fill="none" stroke="#999">
                <path d="M0 .5h5v5M5 16v5H0" />
                <ellipse cx="5" cy="8" rx="1.500" ry="2.500" />
                <ellipse cx="5" cy="13" rx="1.500" ry="2.500" />
              </svg>
            </LinkBracket>
          </InsetWrap>
          <Row $ml={9} $h={16} $top={12}>
            <CheckItem $w="194px"><Check />Ignore Text Wraps</CheckItem>
            <CheckItem><Check><Tick /></Check>Hide overflow</CheckItem>
          </Row>
          <Row $ml={9} $h={16} $top={3}>
            <CheckItem><Check />Ignore Baseline Grid</CheckItem>
          </Row>
        </Form>

        <GroupHead><Arrow $open />Columns</GroupHead>
        <Form $h={143} $pt={12}>
          <Row>
            <Lbl $w={53}>Columns:</Lbl>
            <Field $w={144}>1</Field>
            <Spinner ml={4} />
            <CheckItem $ml={90}><Check><Tick /></Check>Preserve Width</CheckItem>
          </Row>
          <ColTable>
            <ColHead>
              <ColCell $w={191}>
                Width
                <svg width="9" height="9" viewBox="0 0 9 9" fill="none" stroke="#999"><path d="M0 .5h9M1.500 1v8M7.500 1v8" /></svg>
              </ColCell>
              <ColCell $w={194}>
                Gutter
                <svg width="11" height="11" viewBox="0 0 11 11" fill="none" stroke="#ccc"><path d="M0 10 9 1M3 10l7-7" /></svg>
              </ColCell>
            </ColHead>
            <ColBody>
              <Field $w={169}>152.4 mm</Field>
              <Spinner ml={5} />
            </ColBody>
          </ColTable>
          <Row $ml={9} $h={16} $top={4}>
            <CheckItem><Check />Balance text in columns</CheckItem>
          </Row>
        </Form>

        <GroupHead><Arrow />Column Rules</GroupHead>
        <GroupHead><Arrow $open />Vertical Alignment</GroupHead>
        <Form $h={43} $pt={13}>
          <Row>
            <AlignGroup>
              <AlignBtn $on><AlignLines y={[1, 3, 5, 7, 9, 11]} c="#5a5a5a" /></AlignBtn>
              <AlignBtn><AlignLines y={[4, 6, 8]} /></AlignBtn>
              <AlignBtn><AlignLines y={[7, 9, 11]} /></AlignBtn>
              <AlignBtn><AlignLines y={[1, 6, 12]} /></AlignBtn>
            </AlignGroup>
            <BaselineIcon>
              <svg width="12" height="16" viewBox="0 0 12 16" stroke="#e0e0e0">
                <path d="M0 1.500h11M0 4.500h6M0 14.500h11M0 11.500h6" />
              </svg>
            </BaselineIcon>
            <Field $w={45} $dim $ml={6}>0 pt</Field>
            <Spinner />
          </Row>
        </Form>
        <GroupHead><Arrow />Baseline Grid</GroupHead>

        <Tabs items={["Transform", "History", "Navigator"]} active="Transform" h={24} />
        <TransformBody>
          <AnchorBox>
            <svg width="36" height="36" viewBox="0 0 36 36" fill="#666666">
              <rect x="3" y="3" width="30" height="30" />
              <path d="M0 0h6v6H0zM15 0h6v6h-6zM30 0h6v6h-6zM0 15h6v6H0zM30 15h6v6h-6zM0 30h6v6H0zM15 30h6v6h-6zM30 30h6v6h-6z" />
            </svg>
          </AnchorBox>
          <TransformGrid>
            <TfLbl>X:</TfLbl><Field $w={65} $dim>0 mm</Field>
            <TfLbl>W:</TfLbl><Field $w={65} $dim>0 mm</Field>
            <TfLbl>Y:</TfLbl><Field $w={65} $dim>0 mm</Field>
            <TfLbl>H:</TfLbl><Field $w={65} $dim>0 mm</Field>
            <TfLbl>R:</TfLbl>
            <Field $w={65} $dim>0 °<svg width="6" height="4" viewBox="0 0 6 4"><path d="M0 0h6L3 4z" fill="#999" /></svg></Field>
            <TfLbl>S:</TfLbl>
            <Field $w={65} $dim>0 °<svg width="6" height="4" viewBox="0 0 6 4"><path d="M0 0h6L3 4z" fill="#999" /></svg></Field>
          </TransformGrid>
          <ChainBox><Chain /></ChainBox>
        </TransformBody>
      </RightPanel>
    </Main>

    <StatusBar>
      <svg width="11" height="11" viewBox="0 0 11 11" fill="#d8d8d8"><path d="M0 0h1.500v11H0zM11 0v11L3 5.500z" /></svg>
      <StatusIcon $ml={9}><Tri $dir="l" $c="#d8d8d8" /></StatusIcon>
      <PageCount>4,5 of 8</PageCount>
      <Tri $dir="r" $c="#d8d8d8" />
      <StatusIcon $ml={8}>
        <svg width="11" height="11" viewBox="0 0 11 11" fill="#d8d8d8"><path d="M0 0v11l8-5.500zM9.500 0H11v11H9.500z" /></svg>
      </StatusIcon>
      <StatusIcon $ml={6}><DocLines s={15} c="#cfcfcf" /></StatusIcon>
      <StatusIcon $ml={13}>
        <svg width="14" height="14" viewBox="0 0 14 14">
          <path d="M3 11V5a4 4 0 0 1 8 0v6z" fill="#2fae66" />
          <rect x="0.500" y="11" width="13" height="2" fill="#8a8a8a" />
        </svg>
      </StatusIcon>
      <Hint><b>Drag</b> to marquee select. <b>Click</b> an object to select it.</Hint>
    </StatusBar>
  </Page>
);

export default App;
